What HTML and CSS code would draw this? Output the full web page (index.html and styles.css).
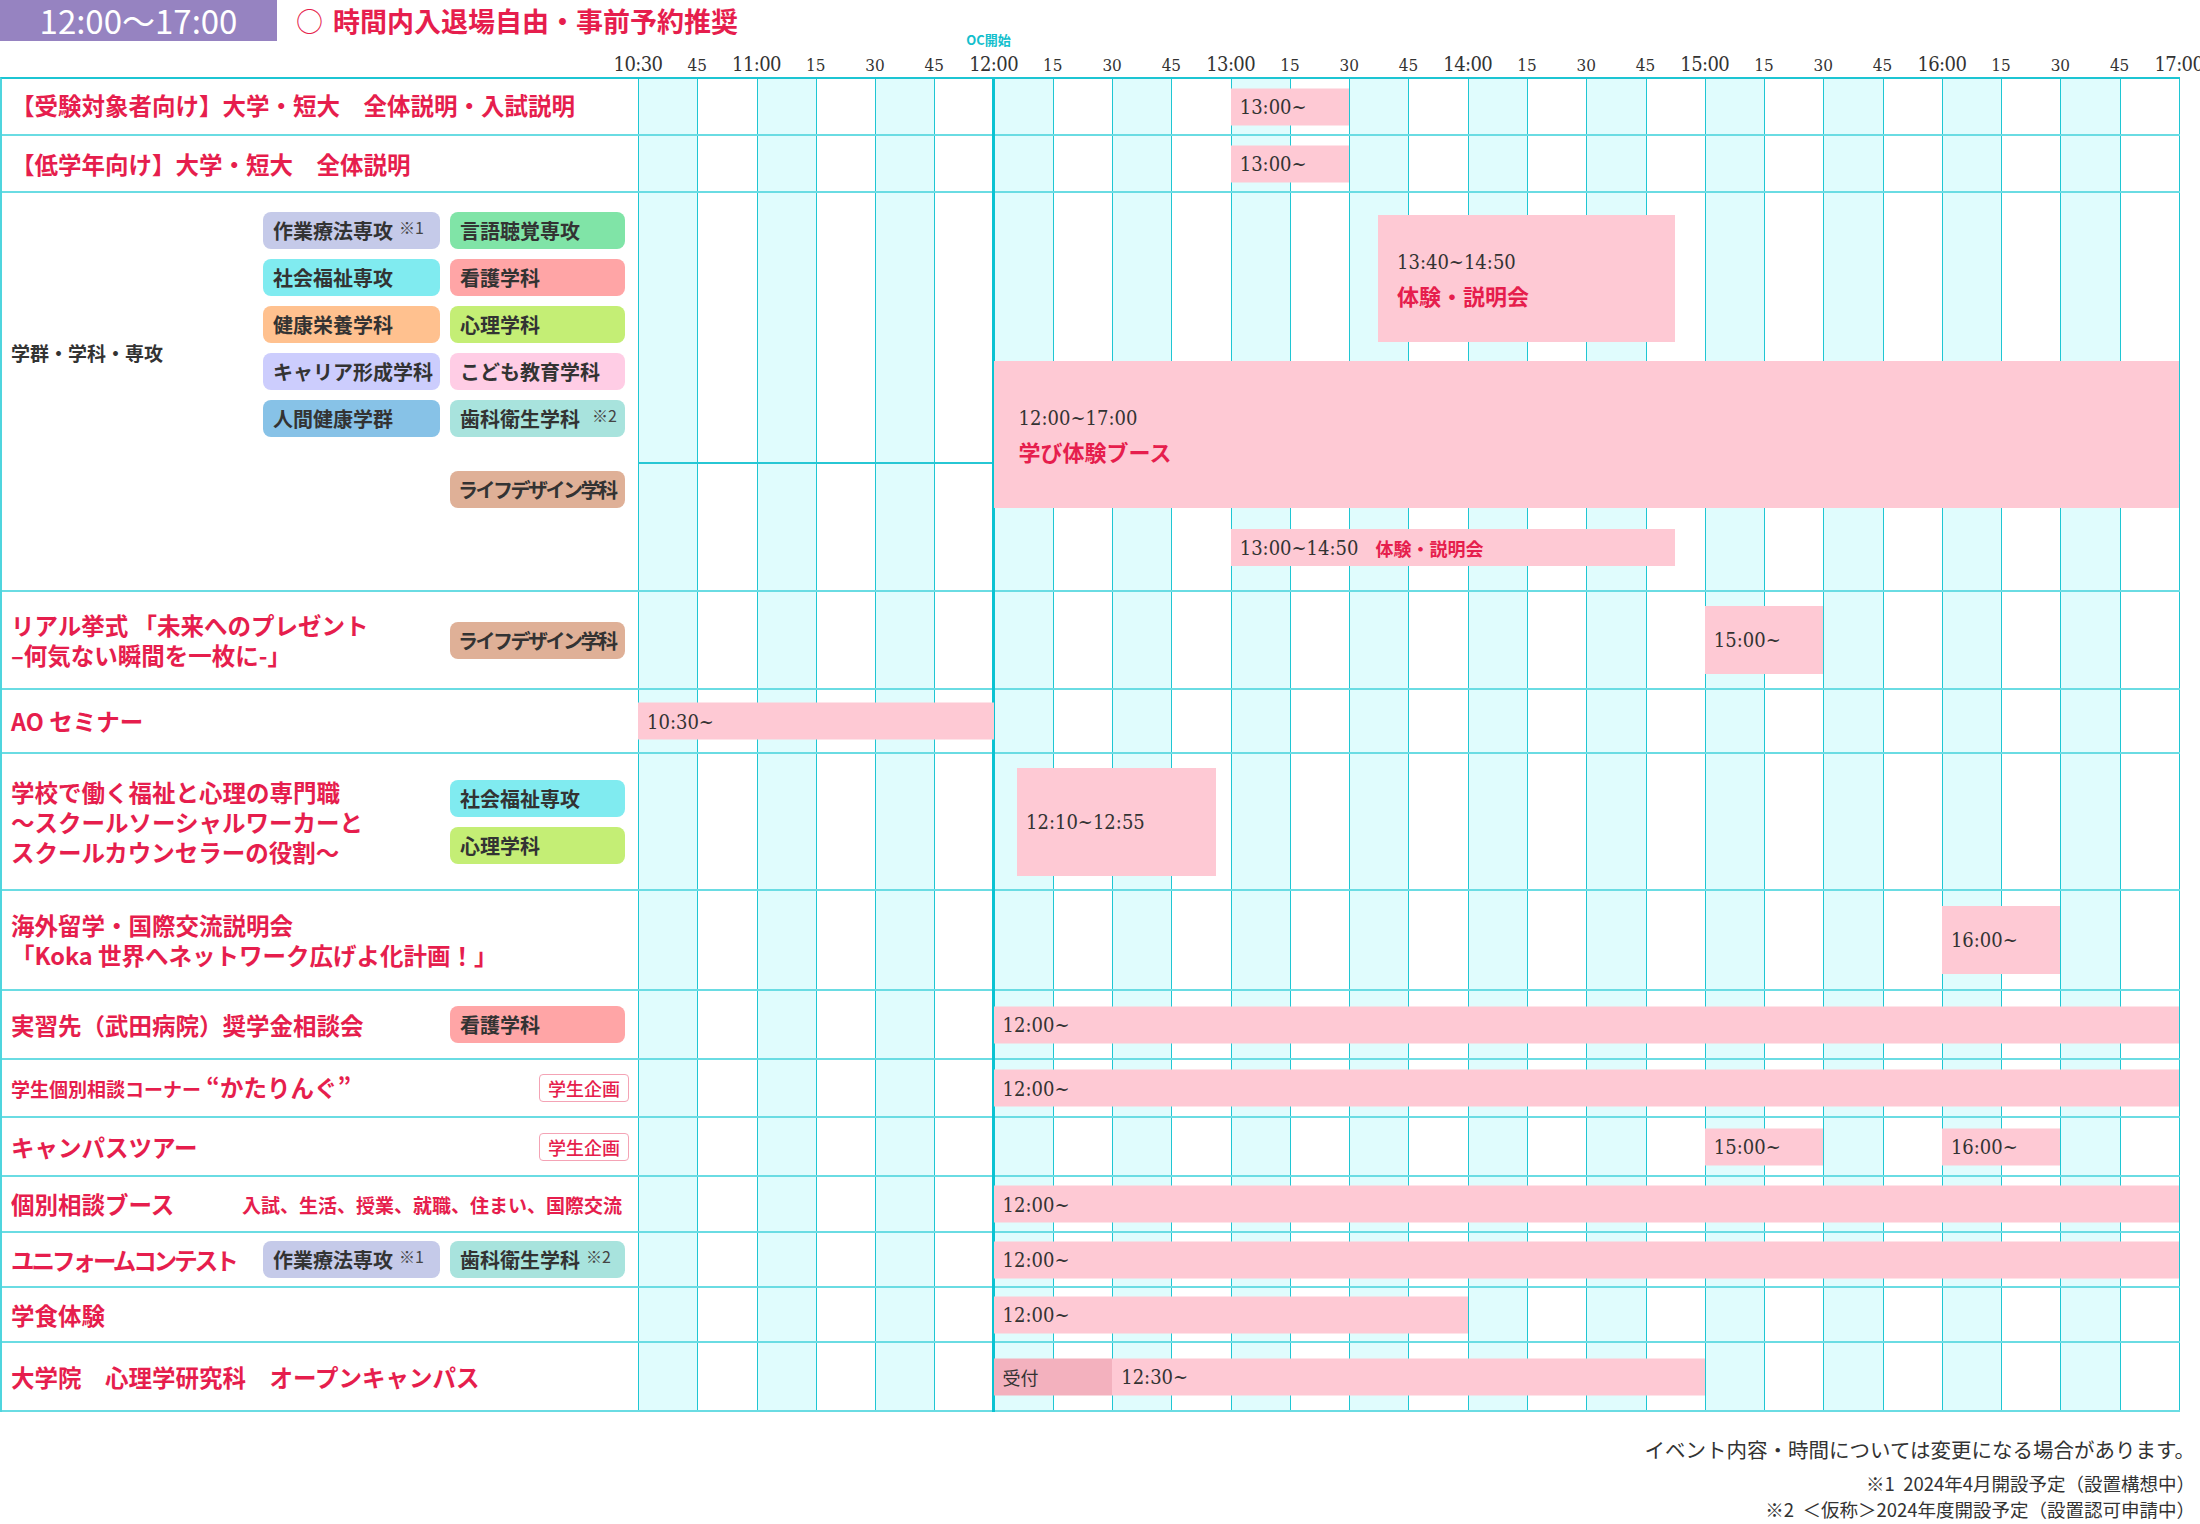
FILE: index.html
```html
<!DOCTYPE html>
<html lang="ja">
<head>
<meta charset="utf-8">
<title>オープンキャンパス タイムテーブル</title>
<link rel="stylesheet" href="styles.css">
</head>
<body>
<div class="page">
  <header class="top">
    <div class="badge">12:00〜17:00</div>
    <h1 class="title"><span class="ring">○</span>時間内入退場自由・事前予約推奨</h1>
  </header>

  <div class="axis">
    <div class="axis-spacer"></div>
    <span class="tick major">10:30</span><span class="tick">45</span>
    <span class="tick major">11:00</span><span class="tick">15</span><span class="tick">30</span><span class="tick">45</span>
    <span class="tick major"><span class="oc">OC開始</span>12:00</span><span class="tick">15</span><span class="tick">30</span><span class="tick">45</span>
    <span class="tick major">13:00</span><span class="tick">15</span><span class="tick">30</span><span class="tick">45</span>
    <span class="tick major">14:00</span><span class="tick">15</span><span class="tick">30</span><span class="tick">45</span>
    <span class="tick major">15:00</span><span class="tick">15</span><span class="tick">30</span><span class="tick">45</span>
    <span class="tick major">16:00</span><span class="tick">15</span><span class="tick">30</span><span class="tick">45</span>
    <span class="tick major">17:00</span>
  </div>

  <div class="schedule">
    <div class="columns" aria-hidden="true">
      <div class="col"></div><div class="col"></div><div class="col"></div><div class="col"></div><div class="col"></div><div class="col"></div>
      <div class="col"></div><div class="col"></div><div class="col"></div><div class="col"></div><div class="col"></div><div class="col"></div>
      <div class="col"></div><div class="col"></div><div class="col"></div><div class="col"></div><div class="col"></div><div class="col"></div>
      <div class="col"></div><div class="col"></div><div class="col"></div><div class="col"></div><div class="col"></div><div class="col"></div>
      <div class="col"></div><div class="col"></div>
    </div>
    <div class="oc-line" aria-hidden="true"></div>

    <div class="row r1">
      <div class="lc"><div class="ev full">【受験対象者向け】大学・短大　全体説明・入試説明</div></div>
      <div class="tc"><div class="bar" style="left:592.7px;width:118.5px">13:00~</div></div>
    </div>

    <div class="row r2">
      <div class="lc"><div class="ev full">【低学年向け】大学・短大　全体説明</div></div>
      <div class="tc"><div class="bar" style="left:592.7px;width:118.5px">13:00~</div></div>
    </div>

    <div class="row r3">
      <div class="lc lc-depts">
        <div class="dept-label">学群・学科・専攻</div>
        <div class="tag t-ot">作業療法専攻<span class="note">※1</span></div>
        <div class="tag t-st">言語聴覚専攻</div>
        <div class="tag t-sw">社会福祉専攻</div>
        <div class="tag t-ns">看護学科</div>
        <div class="tag t-nu">健康栄養学科</div>
        <div class="tag t-ps">心理学科</div>
        <div class="tag t-ca">キャリア形成学科</div>
        <div class="tag t-ch">こども教育学科</div>
        <div class="tag t-hh">人間健康学群</div>
        <div class="tag t-dh">歯科衛生学科<span class="note wide">※2</span></div>
        <div class="tag t-ld last">ライフデザイン学科</div>
      </div>
      <div class="tc">
        <div class="hline"></div>
        <div class="bar stack b-exp" style="left:740px;width:297px"><span class="tm">13:40~14:50</span><span class="bar-red">体験・説明会</span></div>
        <div class="bar stack b-booth" style="left:355.6px;width:1185.4px"><span class="tm">12:00~17:00</span><span class="bar-red">学び体験ブース</span></div>
        <div class="bar b-small" style="left:592.7px;width:444.3px">13:00~14:50<span class="bar-red small">体験・説明会</span></div>
      </div>
    </div>

    <div class="row r4">
      <div class="lc">
        <div class="ev">リアル挙式 「未来へのプレゼント<br>–何気ない瞬間を一枚に-」</div>
        <div class="tag t-ld">ライフデザイン学科</div>
      </div>
      <div class="tc"><div class="bar h68" style="left:1066.8px;width:118.5px">15:00~</div></div>
    </div>

    <div class="row r5">
      <div class="lc"><div class="ev full">AO セミナー</div></div>
      <div class="tc"><div class="bar" style="left:0;width:355.6px">10:30~</div></div>
    </div>

    <div class="row r6">
      <div class="lc">
        <div class="ev">学校で働く福祉と心理の専門職<br>〜スクールソーシャルワーカーと<br>スクールカウンセラーの役割〜</div>
        <div class="tag-stack">
          <div class="tag t-sw">社会福祉専攻</div>
          <div class="tag t-ps">心理学科</div>
        </div>
      </div>
      <div class="tc"><div class="bar h108" style="left:379px;width:199px">12:10~12:55</div></div>
    </div>

    <div class="row r7">
      <div class="lc"><div class="ev full">海外留学・国際交流説明会<br>「Koka 世界へネットワーク広げよ化計画！」</div></div>
      <div class="tc"><div class="bar h68" style="left:1303.9px;width:118.5px">16:00~</div></div>
    </div>

    <div class="row r8">
      <div class="lc">
        <div class="ev">実習先（武田病院）奨学金相談会</div>
        <div class="tag t-ns">看護学科</div>
      </div>
      <div class="tc"><div class="bar" style="left:355.6px;width:1185.4px">12:00~</div></div>
    </div>

    <div class="row r9">
      <div class="lc">
        <div class="ev"><span class="ev-small">学生個別相談コーナー</span> “かたりんぐ”</div>
        <div class="plan">学生企画</div>
      </div>
      <div class="tc"><div class="bar" style="left:355.6px;width:1185.4px">12:00~</div></div>
    </div>

    <div class="row r10">
      <div class="lc">
        <div class="ev">キャンパスツアー</div>
        <div class="plan">学生企画</div>
      </div>
      <div class="tc">
        <div class="bar" style="left:1066.8px;width:118.5px">15:00~</div>
        <div class="bar" style="left:1303.9px;width:118.5px">16:00~</div>
      </div>
    </div>

    <div class="row r11">
      <div class="lc lc-split">
        <div class="ev">個別相談ブース</div>
        <div class="sub">入試、生活、授業、就職、住まい、国際交流</div>
      </div>
      <div class="tc"><div class="bar" style="left:355.6px;width:1185.4px">12:00~</div></div>
    </div>

    <div class="row r12">
      <div class="lc">
        <div class="ev narrow tight">ユニフォームコンテスト</div>
        <div class="tag t-ot">作業療法専攻<span class="note">※1</span></div>
        <div class="tag t-dh">歯科衛生学科<span class="note">※2</span></div>
      </div>
      <div class="tc"><div class="bar" style="left:355.6px;width:1185.4px">12:00~</div></div>
    </div>

    <div class="row r13">
      <div class="lc"><div class="ev full">学食体験</div></div>
      <div class="tc"><div class="bar" style="left:355.6px;width:474.2px">12:00~</div></div>
    </div>

    <div class="row r14">
      <div class="lc"><div class="ev full">大学院　心理学研究科　オープンキャンパス</div></div>
      <div class="tc">
        <div class="bar reception" style="left:355.6px;width:118.5px">受付</div>
        <div class="bar" style="left:474.2px;width:592.7px">12:30~</div>
      </div>
    </div>
  </div>

  <footer class="notes">
    <p class="main">イベント内容・時間については変更になる場合があります。</p>
    <p class="fn">※1&nbsp;&nbsp;2024年4月開設予定（設置構想中）</p>
    <p class="fn">※2&nbsp;&nbsp;＜仮称＞2024年度開設予定（設置認可申請中）</p>
  </footer>
</div>
</body>
</html>
```

FILE: styles.css
```css
* {
  box-sizing: border-box;
  margin: 0;
  padding: 0;
}

html, body {
  width: 2200px;
  height: 1524px;
  overflow: hidden;
  background: #ffffff;
}

body {
  font-family: "Noto Sans CJK JP", "Noto Sans", sans-serif;
  color: #333333;
}

.page {
  width: 2200px;
}

/* ---------- header ---------- */
.top {
  display: flex;
  align-items: center;
  height: 41px;
}

.badge {
  width: 277px;
  height: 41px;
  background: #9683c1;
  color: #ffffff;
  font-size: 33px;
  font-weight: 400;
  line-height: 1;
  display: flex;
  align-items: center;
  justify-content: center;
}

.title {
  margin-left: 19px;
  font-size: 27px;
  font-weight: 700;
  line-height: 1;
  color: #e61e4d;
  display: flex;
  align-items: center;
}

.ring {
  font-weight: 400;
  margin-right: 10px;
}

/* ---------- time axis ---------- */
.axis {
  display: grid;
  grid-template-columns: 608.37px repeat(27, 59.27px);
  height: 36px;
  align-items: end;
  padding-bottom: 3px;
  font-family: "DejaVu Serif Condensed", "DejaVu Serif", serif;
  font-stretch: condensed;
  color: #333333;
}

.tick {
  position: relative;
  text-align: center;
  font-size: 17px;
  line-height: 1;
  white-space: nowrap;
}

.tick.major {
  font-size: 20px;
  letter-spacing: -0.6px;
}

.oc {
  position: absolute;
  left: -10px;
  right: 0;
  bottom: 100%;
  margin-bottom: 8px;
  font-family: "Noto Sans CJK JP", sans-serif;
  font-size: 13px;
  font-weight: 700;
  letter-spacing: 0;
  color: #14bfcd;
  text-align: center;
}

/* ---------- schedule ---------- */
.schedule {
  position: relative;
  width: 2180px;
  border-top: 2px solid #1cc5d3;
  border-left: 2px solid #4fd5de;
}

.columns {
  position: absolute;
  top: 0;
  bottom: 0;
  left: 636px;
  width: 1542px;
  display: grid;
  grid-template-columns: repeat(26, 1fr);
  border-right: 1px solid #1fc6d3;
}

.col {
  border-left: 1px solid #1fc6d3;
}

.col:nth-child(odd) {
  background: #e0fcfd;
}

.oc-line {
  position: absolute;
  top: 0;
  bottom: 0;
  left: 990.1px;
  width: 3px;
  background: #0bc3d2;
  z-index: 1;
}

.row {
  position: relative;
  display: grid;
  grid-template-columns: 636px 1fr;
  border-bottom: 2px solid #6adce3;
}

.r1 { height: 57px; }
.r2 { height: 57px; }
.r3 { height: 399px; }
.r4 { height: 98px; }
.r5 { height: 64px; }
.r6 { height: 137px; }
.r7 { height: 100px; }
.r8 { height: 69px; }
.r9 { height: 58px; }
.r10 { height: 59px; }
.r11 { height: 56px; }
.r12 { height: 55px; }
.r13 { height: 55px; }
.r14 { height: 69px; }

.lc {
  display: grid;
  grid-template-columns: 1fr 177px 175px;
  column-gap: 10px;
  align-items: center;
  padding: 0 13px 0 9px;
  background: #ffffff;
}

.r1 .lc {
  padding-bottom: 4px;
}

.lc-split {
  display: flex;
  align-items: center;
  justify-content: space-between;
  padding-right: 16px;
}

.tc {
  position: relative;
}

/* event labels */
.ev {
  grid-column: 1 / 3;
  color: #e61e4d;
  font-size: 23.5px;
  font-weight: 700;
  line-height: 30px;
  white-space: nowrap;
}

.ev.full {
  grid-column: 1 / -1;
}

.ev.narrow {
  grid-column: 1 / 2;
}

.ev.tight {
  letter-spacing: -3px;
}

.ev-small {
  font-size: 19px;
}

.sub {
  color: #e61e4d;
  font-size: 19px;
  font-weight: 700;
  white-space: nowrap;
}

/* department block */
.lc-depts {
  grid-template-rows: repeat(5, 37px) 61px;
  row-gap: 10px;
  align-items: start;
  align-content: start;
  padding-top: 19px;
}

.dept-label {
  grid-column: 1;
  grid-row: 1 / 7;
  align-self: center;
  padding-bottom: 16px;
  font-size: 19px;
  font-weight: 700;
  color: #333333;
  white-space: nowrap;
}

.lc-depts .tag.last {
  grid-column: 3;
  align-self: end;
}

/* tags */
.tag {
  height: 37px;
  border-radius: 8px;
  display: flex;
  align-items: center;
  padding-left: 10px;
  font-size: 20px;
  font-weight: 700;
  color: #333333;
  white-space: nowrap;
}

.tag-stack {
  grid-column: 3;
  display: flex;
  flex-direction: column;
  gap: 10px;
}

.note {
  align-self: flex-start;
  margin-top: 3px;
  margin-left: 6px;
  font-size: 16px;
  font-weight: 400;
  color: #444444;
}

.note.wide {
  margin-left: 12px;
}

.t-ot { background: #c5cae9; }
.t-st { background: #80e4a7; }
.t-sw { background: #80ebf0; }
.t-ns { background: #ffa5a6; }
.t-nu { background: #ffc18f; }
.t-ps { background: #c4ee75; }
.t-ca { background: #cccdfd; }
.t-ch { background: #ffcde5; }
.t-hh { background: #87c2e7; }
.t-dh { background: #a8e3dd; }
.t-ld {
  background: #dfb097;
  letter-spacing: -2.5px;
  padding-left: 8px;
}

.plan {
  grid-column: 3;
  justify-self: end;
  margin-right: -4px;
  height: 28px;
  padding: 0 8px;
  display: flex;
  align-items: center;
  border: 1.5px solid #f4a3b5;
  border-radius: 4px;
  background: #ffffff;
  color: #e61e4d;
  font-size: 18px;
  font-weight: 500;
  white-space: nowrap;
}

/* bars */
.bar {
  position: absolute;
  top: 50%;
  transform: translateY(-50%);
  height: 37px;
  z-index: 2;
  display: flex;
  align-items: center;
  padding-left: 9px;
  background: #fec9d4;
  font-family: "DejaVu Serif Condensed", "DejaVu Serif", serif;
  font-stretch: condensed;
  font-size: 20px;
  color: #333333;
  white-space: nowrap;
}

.bar.h68 { height: 68px; }
.bar.h108 { height: 108px; }

.bar.stack {
  flex-direction: column;
  align-items: flex-start;
  justify-content: center;
  gap: 3px;
  transform: none;
}

.bar .tm {
  line-height: 30px;
}

.bar-red {
  font-family: "Noto Sans CJK JP", sans-serif;
  font-size: 22px;
  font-weight: 700;
  line-height: 30px;
  color: #e61e4d;
}

.bar-red.small {
  font-size: 18px;
  margin-left: 17px;
}

.b-exp {
  top: 22px;
  height: 127px;
  padding-left: 19px;
}

.b-booth {
  top: 168px;
  height: 147px;
  padding-left: 25px;
}

.b-small {
  top: 336px;
  transform: none;
}

.bar.reception {
  background: #f3b1be;
  font-family: "Noto Sans CJK JP", sans-serif;
  font-size: 18px;
}

.hline {
  position: absolute;
  left: 0;
  right: 0;
  top: 269px;
  height: 2px;
  background: #27c7d4;
}

/* ---------- footer notes ---------- */
.notes {
  margin-top: 22px;
  padding-right: 5px;
  text-align: right;
  color: #333333;
}

.notes .main {
  font-size: 20.5px;
  line-height: 30px;
  margin-bottom: 6px;
}

.notes .fn {
  font-size: 18.5px;
  line-height: 26px;
}
```
